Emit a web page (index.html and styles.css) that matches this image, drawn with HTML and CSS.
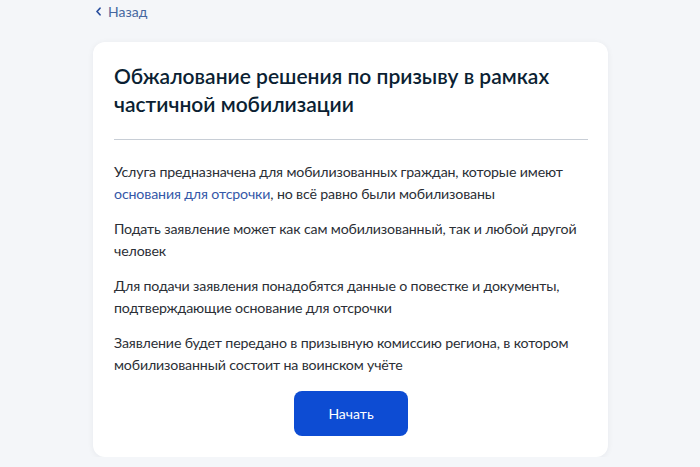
FILE: index.html
```html
<!DOCTYPE html>
<html lang="ru">
<head>
    <meta charset="utf-8">
    <title>Обжалование решения по призыву</title>
    <link rel="stylesheet" href="styles.css">
</head>
<body>
    <div class="page">
        <!-- Back link -->
        <a class="back" href="#">
            <svg class="back-icon" width="7" height="9" viewBox="0 0 7 9">
                <path d="M5 1.2 L2 4.5 L5 7.8" fill="none" stroke="#2a4f9e" stroke-width="1.7" stroke-linecap="round" stroke-linejoin="round"/>
            </svg>
            <span>Назад</span>
        </a>

        <div class="card">
            <h1>Обжалование решения по призыву в рамках частичной мобилизации</h1>
            <hr class="divider">

            <p>Услуга предназначена для мобилизованных граждан, которые имеют <a href="#">основания для отсрочки</a>, но всё равно были мобилизованы</p>
            <p>Подать заявление может как сам мобилизованный, так и любой другой человек</p>
            <p>Для подачи заявления понадобятся данные о повестке и документы, подтверждающие основание для отсрочки</p>
            <p>Заявление будет передано в призывную комиссию региона, в котором мобилизованный состоит на воинском учёте</p>

            <div class="actions">
                <button type="button">Начать</button>
            </div>
        </div>
    </div>
</body>
</html>
```

FILE: styles.css
```css
body {
    font-family: Lato, "Noto Sans", sans-serif;
    margin: 0;
    padding: 0;
    background-color: #f4f6f9;
    color: #0b1f33;
}

.page {
    width: 515px;
    margin-left: 93px;
}

.back {
    display: flex;
    align-items: center;
    gap: 6px;
    height: 22px;
    padding-left: 2px;
    color: #46679f;
    font-size: 14px;
    text-decoration: none;
}

.card {
    margin-top: 20px;
    background-color: #ffffff;
    border-radius: 12px;
    box-shadow: 0 1px 6px rgba(11, 31, 51, 0.06);
    padding: 20px 20px 21px 21px;
}

h1 {
    margin: 0;
    font-size: 21px;
    line-height: 28px;
    font-weight: 600;
    color: #0b1f33;
    padding-right: 30px;
}

.divider {
    margin: 21px 0 21px;
    border: none;
    border-top: 1px solid #c8ced6;
}

p {
    margin: 0 0 13px;
    font-size: 14.2px;
    line-height: 22px;
    letter-spacing: -0.15px;
    color: #2b2f36;
}

p a {
    color: #3558a8;
    text-decoration: none;
}

.actions {
    display: flex;
    justify-content: center;
    margin-top: 15px;
}

button {
    width: 114px;
    height: 45px;
    background-color: #0d4cd3;
    color: #ffffff;
    font-family: Lato, "Noto Sans", sans-serif;
    font-size: 14px;
    border: none;
    border-radius: 8px;
    cursor: pointer;
}
```
